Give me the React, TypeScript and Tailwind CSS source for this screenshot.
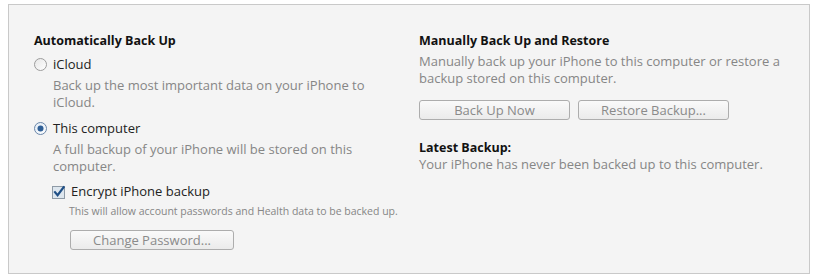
import React from "react";

const font = { fontFamily: '"Open Sans", "Noto Sans", sans-serif' };

function Radio({ checked }: { checked?: boolean }) {
  return (
    <svg width="13" height="13" viewBox="0 0 13 13" className="shrink-0">
      <defs>
        <linearGradient id={checked ? "rg-on" : "rg-off"} x1="0" y1="0" x2="1" y2="1">
          <stop offset="0" stopColor={checked ? "#dfeaf5" : "#e6e6e6"} />
          <stop offset="1" stopColor="#ffffff" />
        </linearGradient>
      </defs>
      <circle cx="6.5" cy="6.5" r="6" fill={`url(#${checked ? "rg-on" : "rg-off"})`} stroke={checked ? "#6a86a8" : "#9c9c9c"} strokeWidth="1" />
      {checked && <circle cx="6.5" cy="6.5" r="3" fill="#2f5f96" />}
    </svg>
  );
}

function Checkbox() {
  return (
    <svg width="14" height="14" viewBox="0 0 14 14" className="shrink-0 overflow-visible">
      <rect x="0.5" y="1.5" width="12" height="12" fill="#dde6ee" stroke="#8e9aa6" />
      <path d="M3 7.2 L5.6 10.2 L11.6 2.2" fill="none" stroke="#1f4f86" strokeWidth="2.2" strokeLinecap="square" />
    </svg>
  );
}

function Button({ children, className = "" }: { children: React.ReactNode; className?: string }) {
  return (
    <button
      className={`h-[20px] rounded-[3px] border border-[#adadad] bg-gradient-to-b from-[#fafafa] to-[#ebebeb] text-[13px] leading-[18px] text-[#8a8a8a] ${className}`}
      style={font}
    >
      {children}
    </button>
  );
}

export default function App() {
  return (
    <div className="w-[819px] h-[278px] bg-white pt-[4px] pl-[8px]" style={font}>
      <div className="w-[802px] h-[270px] border border-[#c9c9c9] bg-[#f4f4f4] pt-[27px] pl-[25px] grid grid-cols-[385px_1fr]">
        {/* left column */}
        <div className="flex flex-col">
          <p className="text-[12.5px] leading-[17px] font-bold text-[#111]">Automatically Back Up</p>

          <div className="mt-[7px] flex items-center gap-[6px] text-[13px] leading-[17px] text-[#222]">
            <Radio /> iCloud
          </div>
          <p className="mt-[4px] ml-[19px] text-[13px] leading-[17px] text-[#868686] w-[330px]">
            Back up the most important data on your iPhone to iCloud.
          </p>

          <div className="mt-[9px] flex items-center gap-[6px] text-[13px] leading-[17px] text-[#222]">
            <Radio checked /> This computer
          </div>
          <p className="mt-[4px] ml-[19px] text-[13px] leading-[17px] text-[#868686] w-[330px]">
            A full backup of your iPhone will be stored on this computer.
          </p>

          <div className="mt-[8px] ml-[18px] flex items-center gap-[5px] text-[13px] leading-[17px] text-[#222]">
            <Checkbox /> Encrypt iPhone backup
          </div>
          <p className="mt-[4px] ml-[35px] text-[10.5px] leading-[14px] text-[#868686]">
            This will allow account passwords and Health data to be backed up.
          </p>
          <div className="mt-[9px] ml-[36px]">
            <Button className="w-[164px]">Change Password...</Button>
          </div>
        </div>

        {/* right column */}
        <div className="flex flex-col">
          <p className="text-[12.5px] leading-[17px] font-bold text-[#111]">Manually Back Up and Restore</p>
          <p className="mt-[4px] text-[13px] leading-[17px] text-[#868686] w-[370px]">
            Manually back up your iPhone to this computer or restore a backup stored on this computer.
          </p>
          <div className="mt-[13px] flex gap-[8px]">
            <Button className="w-[151px]">Back Up Now</Button>
            <Button className="w-[151px]">Restore Backup...</Button>
          </div>
          <p className="mt-[19px] text-[12.5px] leading-[17px] font-bold text-[#111]">Latest Backup:</p>
          <p className="text-[13px] leading-[17px] text-[#868686]">
            Your iPhone has never been backed up to this computer.
          </p>
        </div>
      </div>
    </div>
  );
}
